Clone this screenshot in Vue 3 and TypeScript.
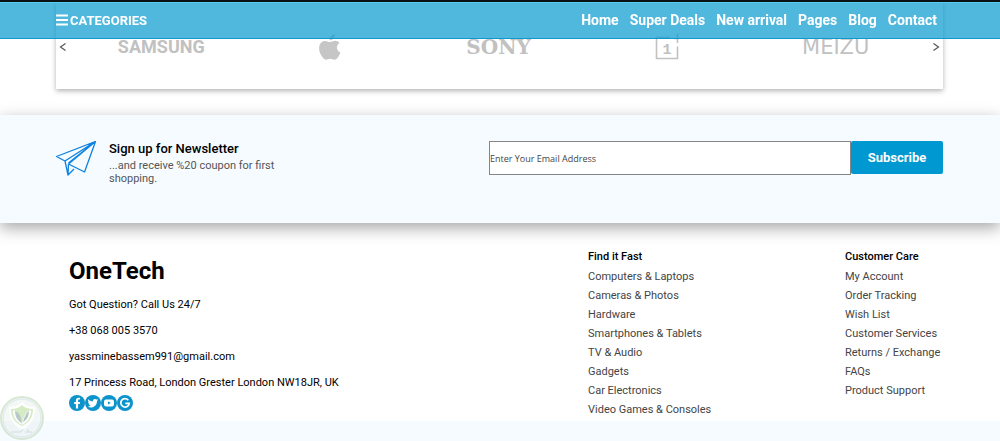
<script setup lang="ts">
import { ref } from 'vue'

interface LinkGroup {
  title: string
  links: string[]
}

const email = ref<string>('')
const navLinks: string[] = ['Home', 'Super Deals', 'New arrival', 'Pages', 'Blog', 'Contact']
const contacts: string[] = [
  'Got Question? Call Us 24/7',
  '+38 068 005 3570',
  'yassminebassem991@gmail.com',
  '17 Princess Road, London Grester London NW18JR, UK',
]
const groups: LinkGroup[] = [
  {
    title: 'Find it Fast',
    links: [
      'Computers & Laptops',
      'Cameras & Photos',
      'Hardware',
      'Smartphones & Tablets',
      'TV & Audio',
      'Gadgets',
      'Car Electronics',
      'Video Games & Consoles',
    ],
  },
  {
    title: 'Customer Care',
    links: [
      'My Account',
      'Order Tracking',
      'Wish List',
      'Customer Services',
      'Returns / Exchange',
      'FAQs',
      'Product Support',
    ],
  },
]
</script>

<template>
  <div class="page">
    <header class="topbar">
      <button class="categories" type="button">
        <svg class="bars" viewBox="0 0 12 12" aria-hidden="true">
          <path d="M0 1.5h12M0 6h12M0 10.5h12" stroke="currentColor" stroke-width="1.8" />
        </svg>
        CATEGORIES
      </button>
      <nav class="nav">
        <a v-for="link in navLinks" :key="link" href="#">{{ link }}</a>
      </nav>
    </header>

    <section class="brands" aria-label="Brands">
      <button class="arrow" type="button" aria-label="Previous brands">
        <svg viewBox="0 0 8 10" aria-hidden="true"><path d="M6.5 1.5 1.5 5l5 3.5" /></svg>
      </button>
      <ul class="brand-list">
        <li class="samsung">SAMSUNG</li>
        <li>
          <svg class="apple" viewBox="0 0 22 26" role="img" aria-label="Apple">
            <path d="M15.8.3c.2 1.6-.5 3.1-1.4 4.2-.9 1.1-2.3 1.9-3.7 1.8-.2-1.5.5-3 1.4-4C13 1.2 14.6.4 15.8.3zM20.6 9.1c-1.7 1-2.7 2.6-2.7 4.5 0 2.2 1.3 4.1 3.5 5-.5 1.5-1.2 2.9-2.1 4.2-1.1 1.6-2.2 2.9-3.9 2.9-1.6 0-2.2-1-4.2-1s-2.6 1-4.2 1c-1.7 0-2.9-1.5-4-3.1C.8 19.6-.2 16.2.2 12.9c.4-3.6 2.7-6 5.7-6 1.9 0 3.2 1.2 5 1.2 1.7 0 2.9-1.3 5.2-1.3 1.8 0 3.5.8 4.5 2.3z" />
          </svg>
        </li>
        <li class="sony">SONY</li>
        <li>
          <svg class="oneplus" viewBox="0 0 24 26" role="img" aria-label="OnePlus">
            <path d="M15 3.5H1.5v21h21V12.5M22.5 0v9M19 4.5h5" fill="none" stroke="currentColor" stroke-width="1.6" />
            <text x="12" y="20" text-anchor="middle">1</text>
          </svg>
        </li>
        <li class="meizu">MEIZU</li>
      </ul>
      <button class="arrow" type="button" aria-label="Next brands">
        <svg viewBox="0 0 8 10" aria-hidden="true"><path d="m1.5 1.5 5 3.5-5 3.5" /></svg>
      </button>
    </section>

    <section class="newsletter">
      <div class="pitch">
        <svg class="plane" viewBox="0 0 40 35" aria-hidden="true">
          <path d="M39.5.5.5 15.5l8.5 4.5L39.5.5 12.5 23l16 8zM9 20l3 14 .5-11M12 34l6-6M39.5.5 12.5 22" />
        </svg>
        <div>
          <h2>Sign up for Newsletter</h2>
          <p>...and receive %20 coupon for first shopping.</p>
        </div>
      </div>
      <form class="signup" @submit.prevent>
        <input v-model="email" type="email" placeholder="Enter Your Email Address" aria-label="Email address" />
        <button type="submit">Subscribe</button>
      </form>
    </section>

    <footer class="footer">
      <div class="about">
        <h1>OneTech</h1>
        <p v-for="line in contacts" :key="line">{{ line }}</p>
        <div class="social">
          <a href="#" aria-label="Facebook">
            <svg viewBox="0 0 16 16"><circle cx="8" cy="8" r="8" /><path class="glyph" d="M6.9 13.5V8.9H5.2V6.9h1.7V5.5c0-1.8 1-2.8 2.7-2.8.6 0 1.1 0 1.5.1v1.8h-1c-.8 0-1 .4-1 1v1.3h1.9l-.3 2H9.1v4.6z" /></svg>
          </a>
          <a href="#" aria-label="Twitter">
            <svg viewBox="0 0 16 16"><circle cx="8" cy="8" r="8" /><path class="glyph" d="M13.2 4.9c-.4.2-.8.3-1.2.4.4-.3.8-.7.9-1.2-.4.2-.9.4-1.4.5a2.2 2.2 0 0 0-3.7 2C6 6.5 4.4 5.6 3.3 4.3c-.6 1-.3 2.3.7 2.9-.4 0-.7-.1-1-.3 0 1 .7 1.9 1.7 2.2-.3.1-.6.1-1 0 .3.9 1.1 1.5 2.1 1.5-.9.7-2 1-3.2.9 3.9 2.5 9.4.2 9.4-5.5.5-.3.9-.7 1.2-1.1z" /></svg>
          </a>
          <a href="#" aria-label="YouTube">
            <svg viewBox="0 0 16 16"><circle cx="8" cy="8" r="8" /><rect class="glyph" x="3" y="4.5" width="10" height="7" rx="2" /><path d="m7 6.5 2.8 1.5L7 9.5z" /></svg>
          </a>
          <a href="#" aria-label="Google">
            <svg viewBox="0 0 16 16"><circle cx="8" cy="8" r="8" /><path d="M11.3 5.2A4.2 4.2 0 1 0 12.2 8.3H8.3" fill="none" stroke="#fff" stroke-width="1.7" /></svg>
          </a>
        </div>
      </div>
      <nav class="groups">
        <div v-for="group in groups" :key="group.title">
          <h3>{{ group.title }}</h3>
          <ul>
            <li v-for="link in group.links" :key="link"><a href="#">{{ link }}</a></li>
          </ul>
        </div>
      </nav>
    </footer>
    <div class="strip"></div>

    <svg class="shield" viewBox="0 0 46 46" aria-hidden="true">
      <circle cx="22" cy="23" r="21" fill="#e9f1ee" stroke="#b9d6b0" stroke-width="2" />
      <circle cx="22" cy="23" r="19" fill="none" stroke="#c3d2d8" stroke-width="1" />
      <path d="M9 12c5 0 9-1 13-5 4 4 8 5 13 5 0 10-3 18-13 23C12 30 9 22 9 12z" fill="#fff" />
      <path d="M11 14c4 0 8-1 11-4v21c-8-4-11-9-11-17z" fill="#b4db92" />
      <path d="M22 10c3 3 7 4 11 4 0 8-3 13-11 17z" fill="#b4db92" />
      <path d="M13 15c5 1 8 6 9 15-6-3-9-8-9-15zM31 15c-5 1-8 6-9 15 6-3 9-8 9-15z" fill="#fff" />
      <path d="M15 16c4 1 6 5 7 12-4-2-7-6-7-12zM29 16c-3 2-5 6-6 11 4-2 6-6 6-11z" fill="#7f9d9d" />
      <path d="M11 37h10l2-3M25 37h7M28 34v3" stroke="#b4c4c2" fill="none" />
    </svg>
  </div>
</template>

<style>
body {
  margin: 0;
  background: #fff;
}
</style>

<style scoped>
.page {
  font-family: Roboto, sans-serif;
  font-size: 11px;
  color: #000;
}
ul, h1, h2, h3, p {
  margin: 0;
  padding: 0;
}
ul {
  list-style: none;
}
a {
  color: inherit;
  text-decoration: none;
}
button {
  border: 0;
  background: none;
  padding: 0;
  color: inherit;
  font-family: inherit;
  cursor: pointer;
}
svg {
  display: block;
}

.topbar {
  position: fixed;
  inset: 0 0 auto;
  z-index: 2;
  display: flex;
  justify-content: space-between;
  align-items: center;
  box-sizing: border-box;
  height: 39px;
  padding: 0 63px 0 56px;
  border-top: 2px solid #0b1216;
  border-bottom: 1px solid #0e9ad0;
  box-shadow: inset 0 1px #55cdf0;
  background: rgba(14, 156, 208, 0.72);
  color: #fff;
  font-size: 14px;
  font-weight: 700;
}
.categories {
  display: flex;
  align-items: center;
  gap: 2px;
  font-size: 13px;
  font-weight: 700;
}
.bars {
  width: 12px;
  height: 12px;
}
.nav {
  display: flex;
  gap: 11px;
}

.brands {
  display: flex;
  align-items: center;
  margin: 0 57px 0 56px;
  padding: 34px 2px 29px;
  box-shadow: 0 2px 5px rgba(0, 0, 0, 0.3);
}
.arrow {
  width: 10px;
}
.arrow svg {
  width: 8px;
  height: 10px;
  margin: 0 auto;
  fill: none;
  stroke: #555;
  stroke-width: 1.2;
}
.brand-list {
  flex: 1;
  display: grid;
  grid-template-columns: repeat(5, 1fr);
  padding: 0 11px 0 9px;
  align-items: center;
  justify-items: center;
  color: #c1c1c1;
  line-height: 26px;
}
.samsung {
  font: bold 18px/26px Roboto, sans-serif;
}
.sony {
  font: bold 20px/26px "DejaVu Serif", serif;
}
.meizu {
  font: 21px/26px "DejaVu Sans", sans-serif;
}
.apple {
  width: 22px;
  height: 26px;
  fill: #c6c6c6;
}
.oneplus {
  width: 24px;
  height: 26px;
}
.oneplus text {
  font: bold 15px "Liberation Mono", monospace;
  fill: currentColor;
}

.newsletter {
  display: flex;
  justify-content: space-between;
  align-items: flex-start;
  margin-top: 26px;
  padding: 26px 57px 38px 56px;
  background: #f5fbff;
  box-shadow: 0 5px 15px rgba(0, 0, 0, 0.35);
}
.pitch {
  display: flex;
  gap: 13px;
}
.pitch > div {
  width: 180px;
}
.plane {
  width: 40px;
  height: 35px;
  fill: none;
  stroke: #0d82e0;
  stroke-width: 1.3;
  stroke-linejoin: round;
}
.newsletter h2 {
  margin-bottom: 3px;
  font-size: 13px;
  font-weight: 500;
  line-height: 15px;
}
.newsletter p {
  line-height: 13px;
  color: #555;
}
.signup {
  display: flex;
  flex: 0 0 454px;
}
.signup input {
  flex: 1;
  min-width: 0;
  height: 34px;
  box-sizing: border-box;
  padding: 0;
  border: 1px solid #858585;
  border-radius: 0;
  background: #fff;
  font: 9px "Open Sans", sans-serif;
}
.signup input::placeholder {
  color: #444;
  opacity: 1;
}
.signup button {
  width: 92px;
  height: 33px;
  border-radius: 2px;
  background: #0098d0;
  color: #fff;
  font-size: 13px;
  font-weight: 700;
}

.footer {
  display: flex;
  justify-content: space-between;
  padding: 24px 57px 2px 69px;
}
.about h1 {
  margin-top: 9px;
  font-size: 24px;
  font-weight: 700;
  line-height: 30px;
}
.about p {
  margin-top: 13px;
  line-height: 13px;
}
.about h1 + p {
  margin-top: 12px;
}
.social {
  display: flex;
  margin-top: 6px;
}
.social svg {
  width: 16px;
  height: 16px;
  fill: #0c93cb;
}
.social .glyph {
  fill: #fff;
}
.groups {
  display: grid;
  grid-template-columns: 1fr 98px;
  width: 355px;
  line-height: 19px;
  color: #444;
}
.groups h3 {
  margin-bottom: 1px;
  color: #000;
  font-size: 11px;
  font-weight: 500;
}
.strip {
  height: 20px;
  background: #f5fbff;
}
.shield {
  position: fixed;
  left: 0;
  bottom: 0;
  width: 46px;
  height: 46px;
  opacity: 0.55;
}
</style>
